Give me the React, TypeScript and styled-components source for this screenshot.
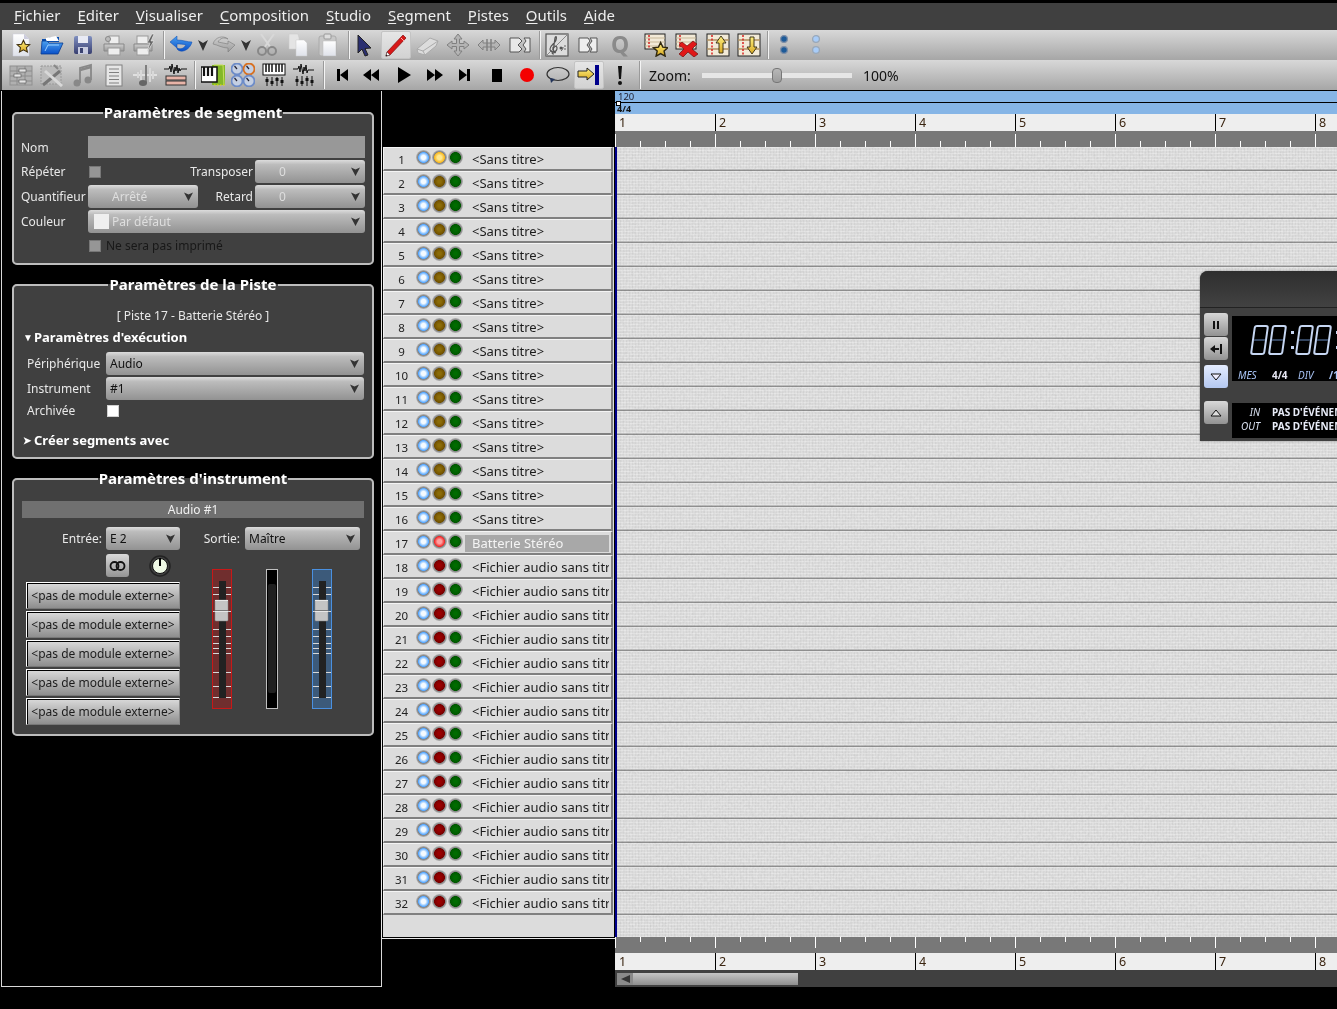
import React from "react";
import styled, { createGlobalStyle } from "styled-components";

const Global = createGlobalStyle`
  html, body { margin: 0; padding: 0; background: #000; }
  body { font-family: "Noto Sans", "Open Sans", sans-serif; font-size: 12px; }
  * { box-sizing: border-box; }
`;

const Page = styled.div`
  position: relative; width: 1337px; height: 1009px; overflow: hidden; background: #000;
  display: flex; flex-direction: column;
`;
const MenuBar = styled.div`
  margin-top: 3px; flex: none; background: #404040; display: flex; align-items: center;
  padding-left: 14px; gap: 17px; color: #eee; font-size: 14.95px; padding-bottom: 4px; height: 27px;
`;
const MenuItem = styled.span`
  u { text-underline-offset: 2px; text-decoration-thickness: 1px; }
`;
const ToolRow = styled.div`
  height: 30px; flex: none; display: flex; align-items: center; overflow: hidden;
  padding-left: ${p => p.$pad}px;
  background: linear-gradient(#d8d8d8, #a6a6a6);
  border-left: 2px solid #404040;
  position: relative;
`;
const Tool = styled.div`
  width: ${p => p.$w}px; height: 28px; flex: none; display: flex; align-items: center; justify-content: center;
  ${p => p.$on ? "background: linear-gradient(#e6e6e6,#d2d2d2); border: 1px solid #c4c4c4; border-radius: 2px;" : ""}
  svg { flex: none; display: block; }
`;
const QGlyph = styled.span`
  font: bold 23px/28px "Noto Sans", sans-serif; color: #8a8a8a; margin-top: -2px;
`;
const Sep = styled.div`
  width: ${p => p.$w}px; height: 28px; flex: none; display: flex; justify-content: center;
  &::before { content: ""; width: 1px; height: 100%; background: #f4f4f4; box-shadow: -1px 0 0 #9a9a9a; }
`;
const ZoomLabel = styled.span`
  margin-left: 5px; width: 53px; color: #111; font-size: 14px; flex: none;
`;
const ZoomTrack = styled.div`
  width: 150px; height: 5px; background: #e6e6e6; position: relative; flex: none;
`;
const ZoomHandle = styled.div`
  position: absolute; left: 70px; top: -5px; width: 10px; height: 15px; border-radius: 4px;
  background: linear-gradient(#b8b8b8,#9c9c9c); border: 1px solid #777;
`;
const ZoomValue = styled.span`margin-left: 11px; color: #111; font-size: 14px;`;

const Main = styled.div`
  display: flex; height: 897px; flex: none; border-top: 1px solid #000;
`;
const LeftPanel = styled.div`
  width: 381px; height: 896px; margin-left: 1px; flex: none; padding: 12px 6px 0 10px; background: #000;
  border: 1px solid #d8d8d8; border-top: none; display: flex; flex-direction: column; gap: 10px;
`;
const Group = styled.fieldset`
  margin: 0; width: 362px; min-width: 0; padding: 0 ${p => p.$pr ?? 7}px ${p => p.$pb ?? 5}px ${p => p.$pl ?? 7}px;
  border: 2px solid #bdbdbd; border-radius: 5px; background: #404040; color: #eee; display: block;
`;
const Legend = styled.legend`
  margin: 0 auto; padding: 0 1px 2px; font-size: 15px; line-height: 18px; font-weight: 700; color: #fff;
`;
const SegGrid = styled.div`
  display: grid; grid-template-columns: 67px 110px 57px 110px; grid-template-rows: 22px 23px 23px 23px 23px;
  gap: 2px 0; margin-top: 13px; align-items: center;
`;
const Label = styled.span`
  white-space: nowrap; color: #e8e8e8;
  ${p => p.$right ? "justify-self: end; padding-right: 2px;" : ""}
`;
const NameField = styled.div`grid-column: 2 / 5; height: 22px; background: #989898;`;
const Check = styled.div`
  width: 12px; height: 12px; margin-left: 1px; background: ${p => p.$on ? "#fff" : "#969696"}; border: 1px solid ${p => p.$on ? "#d0d0d0" : "#777"};
`;
const ComboBox = styled.div`
  position: relative; height: 23px; border-radius: 3px; background: linear-gradient(#dcdcdc, #bcbcbc 20%, #929292);
  display: flex; align-items: center; padding-left: ${p => p.$pl ?? 4}px; white-space: nowrap;
  color: ${p => p.$off ? "#dedede" : "#111"};
  ${p => p.$span ? `grid-column: ${p.$span};` : ""}
  ${p => p.$w ? `width: ${p.$w}px; flex: none;` : ""}
`;
const ComboArrow = styled.svg`position: absolute; right: 4px; top: 6px;`;
const Swatch = styled.span`
  position: absolute; left: 6px; top: 4px; width: 15px; height: 15px; background: #efefef;
`;
const CheckRow = styled.div`
  grid-column: 2 / 5; display: flex; align-items: center; gap: 5px; color: #181818; padding-bottom: 2px;
`;
const Centered = styled.div`
  margin-top: 12px; height: 18px; text-align: center; line-height: 18px; color: #e8e8e8;
`;
const Section = styled.div`
  margin-top: ${p => p.$mt}px; height: 18px; line-height: 18px; font-weight: 700; font-size: 13px; color: #fff;
  display: flex; align-items: center; padding-left: 2px;
`;
const Tri = styled.span`width: 11px; font-size: 10px; flex: none;`;
const ParamGrid = styled.div`
  margin-top: 6px; display: grid; grid-template-columns: 79px 258px; padding-left: 6px; gap: 2px 0;
  grid-template-rows: 23px 23px 17px; align-items: center;
`;
const AudioBar = styled.div`
  margin-top: 12px; height: 17px; background: #707070; color: #f0f0f0; text-align: center; line-height: 17px;
`;
const IOrow = styled.div`
  margin-top: 9px; display: flex; align-items: center; height: 23px;
`;
const IOLabel = styled.span`width: ${p => p.$w}px; text-align: right; flex: none; padding-right: ${p => p.$pr}px; color: #e8e8e8;`;
const Lower = styled.div`display: flex; margin-top: 4px;`;
const LeftCol = styled.div`width: 158px; padding-left: 4px; flex: none;`;
const LinkRow = styled.div`display: flex; align-items: center; height: 23px; padding-left: 80px; gap: 20px; margin-bottom: 5px;`;
const LinkBtn = styled.div`
  width: 23px; height: 23px; border-radius: 3px; background: linear-gradient(#d8d8d8,#949494);
  display: flex; align-items: center; justify-content: center;
`;
const Plugin = styled.div`
  height: 27px; margin-bottom: 2px;
  background: linear-gradient(#dadada,#8e8e8e); color: #1c1c1c; text-align: center; line-height: 25px;
  border-top: 1px solid #fff; border-left: 1px solid #fff; border-bottom: 1px solid #777; border-right: 1px solid #888;
  box-shadow: inset 1px 1px 0 #000;
  &:last-child { margin-bottom: 0; }
`;
const Faders = styled.div`display: flex; gap: 34px; margin: 15px 0 0 32px; align-items: flex-start;`;

const Tracks = styled.div`
  width: 233px; flex: none; display: flex; flex-direction: column; background: #000;
`;
const TrackList = styled.div`
  margin-top: 56px; height: 791px; background: #dcdcdc;
  border: 1px solid #000; border-top: none;
  box-shadow: -1px 0 0 #e8e8e8, 0 1px 0 #e8e8e8;
  padding-right: 1px;
`;
const Row = styled.div`
  height: 24px; display: flex; align-items: center; background: #dcdcdc; color: #222;
  border-top: 1px solid #f4f4f4; border-left: 1px solid #f4f4f4; border-bottom: 2px solid #808080; border-right: 2px solid #808080;
`;
const Num = styled.span`width: 35px; text-align: center; padding-top: 2px; font-size: 11.5px; flex: none; margin-right: -3px;`;
const Led = styled.span`
  width: 15px; height: 15px; border-radius: 50%; flex: none; margin-right: 1px; margin-top: -2px;
  background: radial-gradient(circle closest-side, ${p => p.$c1} 0 ${p => p.$hot ? 28 : 20}%, ${p => p.$c2} 68%, #808080 76%, #a0a0a0 90%, #b8b8b8 100%);
`;
const TrackName = styled.span`
  flex: none; width: 144px; height: 17px; line-height: 17px; padding-left: 7px; overflow: hidden; white-space: nowrap; font-size: 13px;
  color: ${p => p.$sel ? "#f4f4f4" : "#1c1c1c"}; background: ${p => p.$sel ? "#a8a8a8" : "transparent"};
  margin-top: 1px; margin-left: 1px;
`;

const Comp = styled.div`flex: 1; display: flex; flex-direction: column; min-width: 0;`;
const TempoBar = styled.div`
  height: 11px; background: #86b5e6; color: #223; font-size: 9.5px; line-height: 11px; padding-left: 3px;
`;
const SigBar = styled.div`
  position: relative; height: 12px; background: #86b5e6; border-top: 1px solid #000; color: #111; font-size: 9px; font-weight: 700; line-height: 11px; padding-left: 2px;
  &::before { content: ""; position: absolute; left: 1px; top: -2px; width: 3px; height: 3px; background: #fff; border: 1px solid #000; }
`;
const BarNums = styled.div`display: flex; height: ${p => p.$h}px; background: #eeeeee; flex: none; padding-left: 1px;`;
const BarNum = styled.div`
  width: 100px; flex: none; border-right: 1px solid #000; padding-left: 3px; font-size: 12.5px; line-height: 17px; color: #3a2410;
`;
const LoopRuler = styled.div`
  height: ${p => p.$h}px; flex: none; background-color: #787878;
  background-image:
    repeating-linear-gradient(90deg, #fff 0 1px, transparent 1px 100px),
    repeating-linear-gradient(90deg, #fff 0 1px, transparent 1px 25px);
  background-repeat: no-repeat;
  background-size: 100% ${p => p.$bar}px, 100% ${p => p.$beat}px;
  background-position: ${p => p.$down ? "0 0, 0 0" : "0 100%, 0 100%"};
`;
const Canvas = styled.div`
  height: 790px; flex: none; position: relative; border-left: 2px solid #00008b;
  background-color: #dedede;
  background-image:
    repeating-linear-gradient(180deg, #e8e8e8 0 1px, transparent 1px 22px, #bdbdbd 22px 23px, #909090 23px 24px),
    repeating-linear-gradient(0deg, rgba(255,255,255,.28) 0 1px, transparent 1px 3px),
    repeating-linear-gradient(90deg, rgba(130,130,130,.08) 0 1px, transparent 1px 3px);
`;
const Grain = styled.svg`
  position: absolute; inset: 0; width: 100%; height: 100%; mix-blend-mode: multiply;
`;
const ScrollBar = styled.div`
  height: 17px; flex: none; background: #404040; display: flex; align-items: center; padding-left: 2px;
`;
const ScrollArrow = styled.div`
  width: 16px; height: 12px; background: #8a8a8a; display: flex; align-items: center; justify-content: center;
`;
const ScrollThumb = styled.div`
  width: 165px; height: 12px; background: linear-gradient(#c4c4c4,#8e8e8e);
`;

const Transport = styled.div`
  position: absolute; left: 1200px; top: 271px; width: 300px; height: 170px; background: #404040;
  border-radius: 8px 0 0 0; display: flex; flex-direction: column; box-shadow: 0 0 2px rgba(0,0,0,.5);
`;
const TransportTop = styled.div`
  height: 37px; flex: none; background: linear-gradient(#2e2e2e,#424242); border-bottom: 1px solid #222; border-radius: 8px 0 0 0;
`;
const TransportBody = styled.div`
  display: grid; grid-template-columns: 24px 1fr; column-gap: 4px; padding: 5px 0 0 4px;
`;
const TBtnCol = styled.div`display: flex; flex-direction: column; gap: 1px;`;
const TBtn = styled.div`
  width: 24px; height: 23px; border-radius: 3px; display: flex; align-items: center; justify-content: center;
  background: ${p => p.$blue ? "linear-gradient(#e4ecff,#b4c8f0)" : "linear-gradient(#d8d8d8,#929292)"};
  margin-top: ${p => p.$mt ?? 0}px;
`;
const Display = styled.div`
  height: 65px; background: #000; margin-top: 3px; padding: 9px 0 0 20px; color: #fff;
`;
const Digits = styled.div`display: flex; align-items: center; gap: 3px; height: 30px;`;
const Digit = styled.div`
  width: 15px; height: 30px; border: 2px solid #c6d6f2; border-radius: 3px; position: relative; transform: skewX(-8deg);
  &::after { content: ""; position: absolute; left: 0; right: 0; top: 12px; height: 2px; background: #33445e; }
`;
const Colon = styled.div`
  width: 3px; height: 18px; margin-left: 3px; display: flex; flex-direction: column; justify-content: space-between;
  &::before, &::after { content: ""; width: 3px; height: 3px; background: #c6d6f2; }
`;
const MetaRow = styled.div`
  display: flex; align-items: center; margin: 13px 0 0 -14px; font-size: 10px; height: 14px; white-space: nowrap;
`;
const Meta = styled.span`
  width: ${p => p.$w}px; flex: none; font-style: italic; color: #a9c4f5;
`;
const MetaVal = styled.span`
  width: ${p => p.$w}px; flex: none; font-weight: 700; color: ${p => p.$blue ? "#a9c4f5" : "#e8e8f4"};
`;
const InfoBox = styled.div`
  height: 35px; margin-top: 22px; background: #000; font-size: 10px; padding-top: 2px;
`;
const InfoRow = styled.div`display: flex; height: 14px; line-height: 14px; align-items: center; white-space: nowrap;`;
const InfoKey = styled.span`width: 28px; text-align: right; font-style: italic; color: #d8e0f0; flex: none;`;
const InfoVal = styled.span`margin-left: 12px; font-weight: 700; color: #e8ecf8;`;

const Arrow = () => (
  <ComboArrow width="11" height="11" viewBox="0 0 11 11">
    <path d="M1 1.500 L5.500 3.500 L10 1.500 L5.500 10z" fill="#333" />
  </ComboArrow>
);

const Grad = ({ id, a, b }: { id: string; a: string; b: string }) => (
  <linearGradient id={id} x1="0" y1="0" x2="0" y2="1"><stop offset="0" stopColor={a} /><stop offset="1" stopColor={b} /></linearGradient>
);
const S = ({ children, w = 24, h = 24 }: any) => <svg width={w} height={h} viewBox={`0 0 ${w} ${h}`}>{children}</svg>;
const STAR = "M12 2l3 6.500 7 .8-5.200 4.700 1.500 7L12 17.500 5.700 21l1.500-7L2 9.300l7-.8z";
const Defs = () => (
  <svg width="0" height="0" style={{ position: "absolute" }}>
    <defs>
      <Grad id="gray" a="#cfcfcf" b="#9a9a9a" />
      <Grad id="blue" a="#4aa0f0" b="#0a50c8" />
      <Grad id="gold" a="#fff080" b="#d8a820" />
      <Grad id="page" a="#ffffff" b="#dfe2ea" />
      <Grad id="floppy" a="#8090c0" b="#383f70" />
    </defs>
  </svg>
);

const INew = () => <S><path d="M3 1h11l5 5v17H3z" fill="url(#page)" stroke="#ccd" strokeWidth=".5" /><path d="M14 1v5h5z" fill="#ccd" /><path d={STAR} transform="translate(6 6) scale(.62)" fill="url(#gold)" stroke="#403010" strokeWidth="1.800" /></S>;
const IOpen = () => <S><path d="M2 6h6l2-2h9v5H2z" fill="#0b4fb0" /><path d="M6 5l10-2 3 5H6z" fill="#fff" /><path d="M1 21L2 8h5l2 2h14l-5 11z" fill="url(#blue)" stroke="#083a90" strokeWidth=".8" /><path d="M5 18l3-6h11" stroke="#9cd0ff" fill="none" /></S>;
const ISave = () => <S><rect x="3" y="3" width="18" height="18" rx="2" fill="url(#floppy)" /><rect x="7" y="3" width="10" height="7" fill="#e8eaf4" /><rect x="7" y="14" width="10" height="7" fill="#c8cce0" /><rect x="9" y="15" width="3" height="5" fill="#3a4270" /></S>;
const IPrint = () => <S><rect x="7" y="3" width="10" height="8" fill="#eee" stroke="#999" /><path d="M2 11h20v7H2z" fill="url(#gray)" stroke="#888" /><rect x="6" y="15" width="12" height="7" fill="#eee" stroke="#999" /><circle cx="6" cy="6" r="2.500" fill="#bbb" stroke="#888" /></S>;
const IPrint2 = () => <S><rect x="4" y="3" width="11" height="8" fill="#eee" stroke="#999" /><path d="M1 11h18v7H1z" fill="url(#gray)" stroke="#888" /><rect x="4" y="15" width="12" height="7" fill="#eee" stroke="#999" /><path d="M19 1l-5 9h3l-3 9 7-11h-3l3-7z" fill="#666" stroke="#eee" strokeWidth=".6" /></S>;
const IUndo = () => <S><path d="M1 9l7-6v4c6 0 10 2 15 2-2 8-11 12-15 7l0-1 0 0c4 2 7 0 9-3-3-1-6-1-9-1v4z" fill="url(#blue)" stroke="#0848b0" strokeWidth=".5" /></S>;
const IRedo = () => <S><path d="M23 12l-7 7v-4c-6 0-10-3-15-4 2-7 10-9 15-5 0 0 0 0 0 0-4-2-8-1-10 3 3 1 7 1 10 2v-3z" fill="url(#gray)" stroke="#7a7a7a" strokeWidth=".6" /></S>;
const IDrop = () => <S w={12} h={24}><path d="M1 7 L6 10 L11 7 L6 18z" fill="#333" /></S>;
const ICut = () => <S><path d="M19 1L9 15M6 1l10 14" stroke="#d8d8d8" strokeWidth="2" /><circle cx="7" cy="18" r="4" fill="none" stroke="#888" strokeWidth="2" /><circle cx="17" cy="18" r="4" fill="none" stroke="#888" strokeWidth="2" /></S>;
const ICopy = () => <S><path d="M3 1h9l1 4v11H3z" fill="#e4e4e4" stroke="#c8c8c8" strokeWidth=".5" /><path d="M10 7h8l3 3v13H10z" fill="url(#page)" stroke="#c8c8c8" strokeWidth=".5" /></S>;
const IPaste = () => <S><rect x="3" y="3" width="17" height="20" rx="2" fill="#c8c8c8" stroke="#aaa" /><rect x="8" y="1" width="7" height="5" rx="1" fill="#ddd" stroke="#999" /><rect x="7" y="8" width="13" height="15" fill="url(#page)" stroke="#bbb" strokeWidth=".5" /></S>;
const ICursor = () => <S><path d="M5 2l13 13-6 .5 3 6.500-3 1-3-7-4 4z" fill="#2a2f70" stroke="#222" strokeWidth="1" /></S>;
const IPencil = () => <S w={24} h={24}><path d="M3 19L19 2l3 3L6 22l-4 1z" fill="#d81818" stroke="#801010" strokeWidth=".7" /><path d="M17 5l3 3" stroke="#faa" /><path d="M2 23l1-4 3 3z" fill="#fff" stroke="#333" strokeWidth=".5" /><path d="M1.500 23.500l1-2 1 1z" fill="#111" /></S>;
const IEraser = () => <S><path d="M2 16L15 5l8 3-2 5-11 9-7-2z" fill="#dcdcdc" stroke="#aaa" /><path d="M2 16l6 2 15-10" fill="none" stroke="#aaa" /><path d="M8 18l2 4" stroke="#aaa" /></S>;
const IMove = () => <S><path d="M12 1l4 5h-2.500v4.500H18V8l5 4-5 4v-2.500h-4.500V18H16l-4 5-4-5h2.500v-4.500H6V16l-5-4 5-4v2.500h4.500V6H8z" fill="#b4b4b4" stroke="#808080" strokeWidth="1" /></S>;
const IResize = () => <S><path d="M1 12l5-5v3h12V7l5 5-5 5v-3H6v3z" fill="#b4b4b4" stroke="#808080" strokeWidth="1" /><path d="M10 6v12M14 6v12" stroke="#808080" strokeWidth="1.500" /></S>;
const ISplit = () => <S><path d="M2 5h9l3 3-4 4 4 4-3 3H2z" fill="#e8e8e8" stroke="#555" /><path d="M16 5h6v14h-6l2-3-3-4 3-4z" fill="#e8e8e8" stroke="#555" /></S>;
const IScore = () => <S><rect x="1" y="1" width="22" height="22" fill="#dcdcdc" stroke="#555" strokeWidth="1.200" /><path d="M23 1L1 23" stroke="#888" /><path d="M9 21c-3 0-2-3 0-3s2 3-1 1l2-14c1-3 2-1 1 2-1 4-6 5-6 9 0 4 7 4 7-1 0-3-5-2-4 1" fill="none" stroke="#555" strokeWidth="1.200" /><circle cx="16" cy="15" r="1.500" fill="#555" /><path d="M18 14c0 2-1 3-2 4" stroke="#555" fill="none" /><circle cx="20" cy="13" r=".8" fill="#555" /><circle cx="20" cy="16" r=".8" fill="#555" /></S>;
const ISplit2 = () => <S><path d="M3 5h9l2 3-3 4 3 4-2 3H3z" fill="#eee" stroke="#555" /><path d="M14 5h7v14h-7l2-3-3-4 3-4z" fill="#eee" stroke="#555" /></S>;
const TrackBase = () => <><rect x="1" y="1" width="20" height="15" fill="#f2ead8" stroke="#222" /><path d="M1 5h20M1 9h20M1 13h20" stroke="#c8b898" /><path d="M5 2v14" stroke="#d82020" strokeWidth="1.500" strokeDasharray="2 1.500" /></>;
const IAddT = () => <S><TrackBase /><path d={STAR} transform="translate(8 8) scale(.72)" fill="url(#gold)" stroke="#302810" strokeWidth="2" /></S>;
const IDelT = () => <S><TrackBase /><path d="M7 9l5 4 6-5 4 3-5 5 6 5-4 3-6-5-5 5-4-3 5-5-5-4z" fill="#e01818" stroke="#701010" strokeWidth=".7" /></S>;
const IUpT = () => <S><rect x="1" y="1" width="22" height="22" fill="#f2ead8" stroke="#222" /><path d="M1 7h22M1 16h22" stroke="#b09060" strokeWidth="1.500" /><path d="M6 2v20" stroke="#d82020" strokeWidth="1.500" strokeDasharray="2 1.500" /><path d="M15 3l5 7h-3v10h-4V10h-3z" fill="url(#gold)" stroke="#302810" strokeWidth=".9" /></S>;
const IDownT = () => <S><rect x="1" y="1" width="22" height="22" fill="#f2ead8" stroke="#222" /><path d="M1 7h22M1 16h22" stroke="#b09060" strokeWidth="1.500" /><path d="M6 2v20" stroke="#d82020" strokeWidth="1.500" strokeDasharray="2 1.500" /><path d="M15 21l5-7h-3V4h-4v10h-3z" fill="url(#gold)" stroke="#302810" strokeWidth=".9" /></S>;
const Dot = ({ cy, light }: { cy: number; light?: boolean }) => <circle cx="12" cy={cy} r="3.400" fill={light ? "#a8ccf8" : "#1d5a98"} stroke={light ? "#9aa8b8" : "#8090a8"} strokeWidth="1.300" />;
const IDots = ({ light }: { light?: boolean }) => <S><Dot cy={6} light={light} /><Dot cy={17} light={light} /></S>;

const IMatrix = () => <S><rect x="1" y="3" width="22" height="19" fill="#b0b0b0" stroke="#909090" /><path d="M1 8h22M1 13h22M1 18h22M8 3v19M16 3v19" stroke="#8c8c8c" /><rect x="10" y="6" width="7" height="3" fill="#e4e4e4" stroke="#555" strokeWidth=".6" /><rect x="5" y="11" width="7" height="3" fill="#e4e4e4" stroke="#555" strokeWidth=".6" /><rect x="10" y="17" width="7" height="3" fill="#e4e4e4" stroke="#555" strokeWidth=".6" /></S>;
const ITools = () => <S><rect x="1" y="3" width="20" height="18" fill="#bbb" stroke="#999" strokeDasharray="2 1" /><path d="M3 22L20 8" stroke="#777" strokeWidth="3" /><path d="M5 8l17 15" stroke="#d8d8d8" strokeWidth="3" /><path d="M14 2l4 4" stroke="#888" strokeWidth="2" /></S>;
const INote = () => <S><circle cx="6" cy="20" r="3.500" fill="#888" /><circle cx="17" cy="17" r="3.500" fill="#888" /><path d="M9 20V5l11-3v15" fill="none" stroke="#888" strokeWidth="1.800" /><path d="M9 7l11-3" stroke="#888" strokeWidth="2.500" /></S>;
const IList = () => <S><rect x="4" y="2" width="16" height="21" fill="#e6e6e6" stroke="#808080" /><path d="M7 6h10M7 9.500h10M7 13h10M7 16.500h10M7 20h10" stroke="#808080" /></S>;
const IAudioN = () => <S><path d="M0 12h24" stroke="#e0e0e0" strokeWidth="2" /><path d="M5 9v6M8 7v10M17 5v14M20 8v8" stroke="#d8d8d8" strokeWidth="2" /><path d="M13 2v18" stroke="#777" strokeWidth="1.800" /><ellipse cx="10" cy="20" rx="4" ry="3" fill="#666" /></S>;
const IWave = () => <S><path d="M0 6h5l1-3 1 6 1-8 2 10 1-7 1 4 1-6 1 8 1-5 1 3 1-2h6" fill="none" stroke="#111" strokeWidth="1" /><rect x="2" y="13" width="20" height="4" fill="#e8b4a8" stroke="#333" /><rect x="2" y="18" width="20" height="4" fill="#e8b4a8" stroke="#333" /></S>;
const IKeysGreen = () => <S><rect x="11" y="2" width="13" height="20" fill="#84b828" /><path d="M13 2h9l1 20" fill="none" stroke="#c8e060" /><rect x="0" y="4" width="16" height="15" fill="#fff" stroke="#111" strokeWidth="1.500" /><path d="M3 4v9M7 4v9M11 4v9" stroke="#111" strokeWidth="2.200" /><path d="M13 22h11" stroke="#e8e000" strokeDasharray="1.500 1.500" /></S>;
const Knob = ({ x, y, c = "#6d8cc8", a = "#223" }: any) => <g><circle cx={x} cy={y} r="5.500" fill="#c4cfe2" stroke={c} strokeWidth="1.800" /><path d={`M${x} ${y}l-2.500-3`} stroke={a} strokeWidth="1.200" /></g>;
const IKnobs = () => <S><Knob x={6} y={6} /><Knob x={18} y={6} c="#d87020" /><Knob x={6} y={18} /><Knob x={18} y={18} /></S>;
const IPiano = () => <S><rect x="1" y="1" width="22" height="11" fill="#fff" stroke="#111" /><path d="M4 1v8M7 1v8M10 1v8M14 1v8M17 1v8M20 1v8" stroke="#111" strokeWidth="1.500" /><path d="M5 14v9M10 14v9M15 14v9M20 14v9" stroke="#111" /><rect x="3.500" y="16" width="3" height="3" fill="#111" /><rect x="8.500" y="18" width="3" height="3" fill="#111" /><rect x="13.500" y="15" width="3" height="3" fill="#111" /><rect x="18.500" y="17" width="3" height="3" fill="#111" /></S>;
const IMix = () => <S><path d="M1 6h5l1-3 1 6 1-8 2 10 1-7 1 4 1-6 1 8 1-3h6" fill="none" stroke="#111" /><path d="M5 13v10M10 13v10M15 13v10M20 13v10" stroke="#111" /><rect x="3.500" y="16" width="3" height="3" fill="#111" /><rect x="8.500" y="18" width="3" height="3" fill="#111" /><rect x="13.500" y="15" width="3" height="3" fill="#111" /><rect x="18.500" y="17" width="3" height="3" fill="#111" /></S>;

const T = ({ d }: { d: string }) => <S w={20} h={20}><path d={d} fill="#000" /></S>;
const IPrev = () => <T d="M5 4h3v12H5zM8 10l8-6v12z" />;
const IRew = () => <T d="M2 10l8-6v12zM10 10l8-6v12z" />;
const IPlay = () => <T d="M4 2l13 8-13 8z" />;
const IFf = () => <T d="M2 4l8 6-8 6zM10 4l8 6-8 6z" />;
const INext = () => <T d="M4 4l8 6-8 6zM12 4h3v12h-3z" />;
const IStop = () => <T d="M5 4h10v13H5z" />;
const IRec = () => <S w={20} h={20}><circle cx="10" cy="10" r="7" fill="#f40000" /></S>;
const ILoop = () => <S><ellipse cx="12" cy="11" rx="11" ry="6.500" fill="none" stroke="#333" strokeWidth="1.200" /><path d="M4 15l5 1-4 4z" fill="#23345a" /></S>;
const IGoto = () => <S><path d="M1 8h9V5l7 6-7 6v-3H1z" fill="url(#gold)" stroke="#222" /><rect x="18" y="2" width="4" height="20" fill="#00008b" /></S>;
const IBang = () => <S><path d="M10 3h4l-1 13h-2z" fill="#111" /><circle cx="12" cy="20" r="2" fill="#111" /></S>;

type Item = { w: number; i?: React.ReactNode; sep?: boolean; on?: boolean };
const row1: Item[] = [
  { w: 29, i: <INew /> }, { w: 31, i: <IOpen /> }, { w: 31, i: <ISave /> }, { w: 31, i: <IPrint /> }, { w: 31, i: <IPrint2 /> },
  { w: 8, sep: true }, { w: 26, i: <IUndo /> }, { w: 18, i: <IDrop /> }, { w: 24, i: <IRedo /> }, { w: 20, i: <IDrop /> },
  { w: 22, i: <ICut /> }, { w: 39, i: <ICopy /> }, { w: 22, i: <IPaste /> }, { w: 20, sep: true }, { w: 12, i: <ICursor /> }, { w: 10 },
  { w: 30, i: <IPencil />, on: true }, { w: 32, i: <IEraser /> }, { w: 30, i: <IMove /> }, { w: 31, i: <IResize /> }, { w: 32, i: <ISplit /> },
  { w: 8, sep: true }, { w: 26, i: <IScore /> }, { w: 36, i: <ISplit2 /> }, { w: 28, i: <QGlyph>Q</QGlyph> }, { w: 6 },
  { w: 31, i: <IAddT /> }, { w: 31, i: <IDelT /> }, { w: 31, i: <IUpT /> }, { w: 31, i: <IDownT /> },
  { w: 8, sep: true }, { w: 24, i: <IDots /> }, { w: 40, i: <IDots light /> },
];
const row2: Item[] = [
  { w: 31, i: <IMatrix /> }, { w: 31, i: <ITools /> }, { w: 31, i: <INote /> }, { w: 31, i: <IList /> }, { w: 31, i: <IAudioN /> }, { w: 31, i: <IWave /> },
  { w: 8, sep: true }, { w: 27, i: <IKeysGreen /> }, { w: 33, i: <IKnobs /> }, { w: 29, i: <IPiano /> }, { w: 32, i: <IMix /> },
  { w: 8, sep: true }, { w: 28, i: <IPrev /> }, { w: 30, i: <IRew /> }, { w: 35, i: <IPlay /> }, { w: 28, i: <IFf /> }, { w: 32, i: <INext /> },
  { w: 31, i: <IStop /> }, { w: 30, i: <IRec /> }, { w: 32, i: <ILoop /> }, { w: 30, i: <IGoto />, on: true }, { w: 32, i: <IBang /> }, { w: 8, sep: true },
];
const Tools = ({ items }: { items: Item[] }) => <>{items.map((t, k) => t.sep ? <Sep key={k} $w={t.w} /> : <Tool key={k} $w={t.w} $on={t.on}>{t.i}</Tool>)}</>;

const TICKS = [587, 594, 611, 629, 636, 643, 648, 653, 672, 686, 697];
const Fader = ({ border, bg }: { border: string; bg: string }) => (
  <svg width="20" height="141" viewBox="0 0 20 141">
    <rect x=".5" y=".5" width="19" height="139" fill={bg} stroke={border} />
    {TICKS.map(y => <rect key={y} x="1" y={y - 569} width="18" height="1" fill="#d8d8d8" />)}
    <rect x="7" y="12" width="7" height="117" fill="#222" />
    <rect x="3" y="31" width="13" height="21" rx="1" fill="#c4c4c4" stroke="#888" strokeWidth=".5" />
    <rect x="3" y="41" width="13" height="1" fill="#777" />
    <rect x="3" y="31" width="13" height="1" fill="#e8e8e8" />
    <rect x="3" y="42" width="13" height="1" fill="#e8e8e8" />
  </svg>
);
const Meter = () => (
  <svg width="12" height="141" viewBox="0 0 12 141">
    <rect x=".5" y=".5" width="11" height="139" fill="#000" stroke="#c0c0c0" />
    <rect x="2" y="15" width="8" height="109" rx="2" fill="#202020" />
  </svg>
);
const MENU: [string, string][] = [["F", "ichier"], ["E", "diter"], ["V", "isualiser"], ["C", "omposition"], ["S", "tudio"], ["S", "egment"], ["P", "istes"], ["O", "utils"], ["A", "ide"]];
const BARS = [1, 2, 3, 4, 5, 6, 7, 8];

export default function App() {
  const tracks = Array.from({ length: 32 }, (_, i) => i + 1);
  return (
    <Page>
      <Global />
      <Defs />
      <MenuBar>
        {MENU.map(([a, b]) => <MenuItem key={a + b}><u>{a}</u>{b}</MenuItem>)}
      </MenuBar>
      <ToolRow $pad={5}><Tools items={row1} /></ToolRow>
      <ToolRow $pad={3}>
        <Tools items={row2} />
        <ZoomLabel>Zoom:</ZoomLabel>
        <ZoomTrack><ZoomHandle /></ZoomTrack>
        <ZoomValue>100%</ZoomValue>
      </ToolRow>
      <Main>
        <LeftPanel>
          <Group>
            <Legend>Paramètres de segment</Legend>
            <SegGrid>
              <Label>Nom</Label><NameField />
              <Label>Répéter</Label><Check /><Label $right>Transposer</Label>
              <ComboBox $pl={24} $off>0<Arrow /></ComboBox>
              <Label>Quantifieur</Label><ComboBox $pl={24} $off>Arrêté<Arrow /></ComboBox>
              <Label $right>Retard</Label><ComboBox $pl={24} $off>0<Arrow /></ComboBox>
              <Label>Couleur</Label><ComboBox $pl={24} $off $span="2 / 5"><Swatch />Par défaut<Arrow /></ComboBox>
              <span /><CheckRow><Check />Ne sera pas imprimé</CheckRow>
            </SegGrid>
          </Group>
          <Group $pb={8}>
            <Legend>Paramètres de la Piste</Legend>
            <Centered>[ Piste 17 - Batterie Stéréo ]</Centered>
            <Section $mt={3}><Tri>▼</Tri>Paramètres d'exécution</Section>
            <ParamGrid>
              <Label>Périphérique</Label><ComboBox>Audio<Arrow /></ComboBox>
              <Label>Instrument</Label><ComboBox>#1<Arrow /></ComboBox>
              <Label>Archivée</Label><Check $on />
            </ParamGrid>
            <Section $mt={12}><Tri>➤</Tri>Créer segments avec</Section>
          </Group>
          <Group $pl={8} $pr={8} $pb={9}>
            <Legend>Paramètres d'instrument</Legend>
            <AudioBar>Audio #1</AudioBar>
            <IOrow>
              <IOLabel $w={84} $pr={4}>Entrée:</IOLabel>
              <ComboBox $w={74}>E 2<Arrow /></ComboBox>
              <IOLabel $w={65} $pr={5}>Sortie:</IOLabel>
              <ComboBox $w={115}>Maître<Arrow /></ComboBox>
            </IOrow>
            <Lower>
              <LeftCol>
                <LinkRow>
                  <LinkBtn>
                    <svg width="17" height="10" viewBox="0 0 17 10"><circle cx="5.500" cy="5" r="4" fill="none" stroke="#111" strokeWidth="1.800" /><circle cx="11.500" cy="5" r="4" fill="none" stroke="#111" strokeWidth="1.800" /></svg>
                  </LinkBtn>
                  <svg width="22" height="22" viewBox="0 0 22 22"><circle cx="11" cy="11" r="10" fill="none" stroke="#222" strokeWidth="1.500" /><circle cx="11" cy="11" r="7.500" fill="#eef8e4" stroke="#111" /><path d="M11 11V3" stroke="#000" strokeWidth="2" /></svg>
                </LinkRow>
                <div>
                  {[0, 1, 2, 3, 4].map(i => <Plugin key={i}>&lt;pas de module externe&gt;</Plugin>)}
                </div>
              </LeftCol>
              <Faders>
                <Fader border="#c81818" bg="#702e2e" />
                <Meter />
                <Fader border="#4a90e0" bg="#3c5a7a" />
              </Faders>
            </Lower>
          </Group>
        </LeftPanel>
        <Tracks>
          <TrackList>
            {tracks.map(n => {
              const audio = n >= 17;
              const sel = n === 17;
              const on = n === 1;
              const c = sel ? ["#ffa0a0", "#f02828"] : audio ? ["#9a0000", "#780000"] : on ? ["#ffe890", "#f8b820"] : ["#8c6c08", "#705000"];
              return (
                <Row key={n}>
                  <Num>{n}</Num>
                  <Led $hot $c1="#f4faff" $c2="#58a8ff" />
                  <Led $hot={sel || on} $c1={c[0]} $c2={c[1]} />
                  <Led $c1="#006c00" $c2="#005800" />
                  <TrackName $sel={sel}>{sel ? "Batterie Stéréo" : audio ? "<Fichier audio sans titr" : "<Sans titre>"}</TrackName>
                </Row>
              );
            })}
          </TrackList>
        </Tracks>
        <Comp>
          <TempoBar>120</TempoBar>
          <SigBar>4/4</SigBar>
          <BarNums $h={17}>{BARS.map(b => <BarNum key={b}>{b}</BarNum>)}</BarNums>
          <LoopRuler $h={16} $bar={13} $beat={6} />
          <Canvas>
            <Grain aria-hidden="true">
              <filter id="weave">
                <feTurbulence type="fractalNoise" baseFrequency="0.42 0.38" numOctaves="2" seed="4" />
                <feColorMatrix values="0 0 0 0 0.6  0 0 0 0 0.6  0 0 0 0 0.6  0.5 0 0 0 -0.19" />
              </filter>
              <rect width="100%" height="100%" filter="url(#weave)" />
            </Grain>
          </Canvas>
          <LoopRuler $h={16} $bar={11} $beat={5} $down />
          <BarNums $h={17}>{BARS.map(b => <BarNum key={b}>{b}</BarNum>)}</BarNums>
          <ScrollBar>
            <ScrollArrow><svg width="9" height="8" viewBox="0 0 9 8"><path d="M0 4l9-4v8z" fill="#333" /></svg></ScrollArrow>
            <ScrollThumb />
          </ScrollBar>
        </Comp>
      </Main>
      <Transport>
        <TransportTop />
        <TransportBody>
          <TBtnCol>
            <TBtn><svg width="10" height="10" viewBox="0 0 10 10"><path d="M2 1h2v8H2zM6 1h2v8H6z" fill="#111" /></svg></TBtn>
            <TBtn><svg width="12" height="10" viewBox="0 0 12 10"><path d="M10 0h2v10h-2zM0 5l5-4v3h4v2H5v3z" fill="#111" /></svg></TBtn>
            <TBtn $blue $mt={4}><svg width="12" height="8" viewBox="0 0 12 8"><path d="M1 1h10L6 7z" fill="#eef" stroke="#111" /></svg></TBtn>
            <TBtn $mt={12}><svg width="12" height="8" viewBox="0 0 12 8"><path d="M1 7h10L6 1z" fill="#ddd" stroke="#111" /></svg></TBtn>
          </TBtnCol>
          <div>
            <Display>
              <Digits role="img" aria-label="00:00">
                <Digit /><Digit /><Colon /><Digit /><Digit /><Colon />
              </Digits>
              <MetaRow>
                <Meta $w={34}>MES</Meta><MetaVal $w={26}>4/4</MetaVal><Meta $w={31}>DIV</Meta><MetaVal $blue $w={20}>/1</MetaVal>
              </MetaRow>
            </Display>
            <InfoBox>
              <InfoRow><InfoKey>IN</InfoKey><InfoVal>PAS D'ÉVÉNEMENT</InfoVal></InfoRow>
              <InfoRow><InfoKey>OUT</InfoKey><InfoVal>PAS D'ÉVÉNEMENT</InfoVal></InfoRow>
            </InfoBox>
          </div>
        </TransportBody>
      </Transport>
    </Page>
  );
}
